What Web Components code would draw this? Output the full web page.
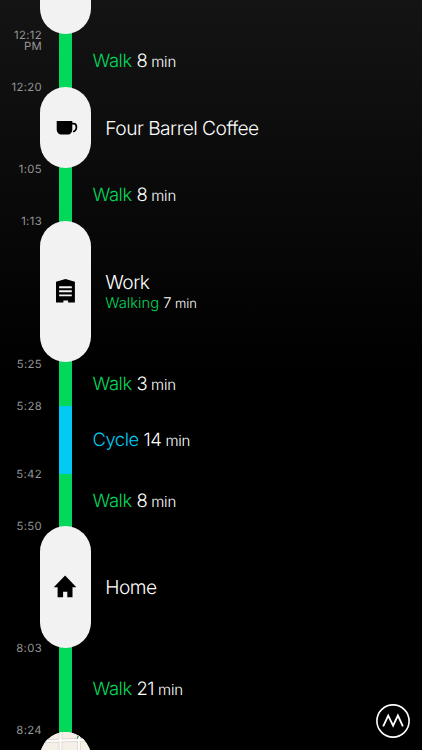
<!DOCTYPE html>
<html lang="en">
<head>
<meta charset="utf-8">
<title>Timeline</title>
<style>
html,body{margin:0;height:100%;background:#000;overflow:hidden}
</style>
</head>
<body>
<day-timeline>
  <place-visit style="--h:34.4px"></place-visit>
  <trip-leg time="12:12 PM" activity="Walk" amount="8" style="--h:52.4px;--label-shift:1.2px"></trip-leg>
  <place-visit time="12:20" icon="cup" style="--h:81.4px">Four Barrel Coffee</place-visit>
  <trip-leg time="1:05" activity="Walk" amount="8" style="--h:52.6px;--label-shift:1.2px"></trip-leg>
  <place-visit time="1:13" icon="office" activity="Walking" amount="7" style="--h:141.2px">Work</place-visit>
  <trip-leg time="5:25" activity="Walk" amount="3" style="--h:44.5px;--time-shift:1.2px;--label-shift:-1px"></trip-leg>
  <trip-leg time="5:28" activity="Cycle" amount="14" style="--h:67.5px;--leg:#02caf2;--time-shift:-.9px;--label-shift:-1px"></trip-leg>
  <trip-leg time="5:42" activity="Walk" amount="8" style="--h:52px;--label-shift:1.6px"></trip-leg>
  <place-visit time="5:50" icon="home" style="--h:122.2px">Home</place-visit>
  <trip-leg time="8:03" activity="Walk" amount="21" style="--h:83.8px;--time-shift:-.9px;--label-shift:-1.6px;--label-lift:1px"></trip-leg>
  <place-visit time="8:24" icon="map" style="--h:81px;--time-shift:-2.4px"></place-visit>
  <brand-badge slot="badge"></brand-badge>
</day-timeline>
<script>
const icons = {
  cup: '<svg width="51" height="40" viewBox="0 0 51 40"><path d="M16.7 14h15.6v8.2c0 3-1.8 5.4-4.8 5.4h-5.8c-3 0-5-2.4-5-5.4z"/><path d="M32 16.6h1.4c2.2 0 3 1.4 3 3.3 0 2.3-1 4-3.3 4.8" fill="none" stroke="#000" stroke-width="1.7"/></svg>',
  office: '<svg width="51" height="40" viewBox="0 0 51 40"><path d="M16 10.8 25.5 8l9.4 2.8v20.7h-6.8v-2h-4.7v2H16z"/><path d="M19.1 16.3h12.7M19.1 20.3h12.7M19.1 24.4h12.7" stroke="#f2f2f2" stroke-width="1.9"/></svg>',
  home: '<svg width="51" height="40" viewBox="0 0 51 40"><path d="m25.1 8.5 11 11.4v.4h-3.6v9.9h-5.2v-5.4h-4.2v5.4h-5.5v-9.9H14v-.4z"/></svg>',
  map: '<svg width="51" height="81" viewBox="0 0 51 81"><rect width="51" height="81" fill="#f5f0e7"/><path d="M0 9.2 51 7.5M20.5 0v81M38.8 0v81M0 30h51" fill="none" stroke="#d6d2ca" stroke-width="3.6"/><path d="M0 9.2 51 7.5M20.5 0v81M38.8 0v81M0 30h51" fill="none" stroke="#fff" stroke-width="2"/><path d="M38.6 3.3q-.8 1.8-1.4 3.2" fill="none" stroke="#21943d" stroke-width="1.1"/></svg>'
};

const rowStyles = `
  :host{display:grid;grid-template-columns:40px 51px 1fr;height:var(--h);position:relative}
  .time{margin:calc(-4.5px + var(--time-shift,0px)) -2px 0 0;padding-left:6px;text-align:right;
    font-size:11.3px;line-height:11.2px;letter-spacing:.35px;font-weight:400;color:#969696}
  .amount{font-weight:350;color:#fff}
  .activity{color:#04d85b}`;

class DayTimeline extends HTMLElement {
  constructor() {
    super();
    this.attachShadow({mode: 'open'}).innerHTML = `<style>
      :host{display:block;position:relative;width:422px;height:750px;overflow:hidden;
        background:linear-gradient(#141414 0,#0d0d0d 130px,#060606 260px,#000 375px);
        font-family:Inter,"Liberation Sans",sans-serif;font-weight:300;color:#fff;text-rendering:geometricPrecision}
      main{display:flex;flex-direction:column}
      aside{position:absolute;right:11px;bottom:11.5px}
    </style><main><slot></slot></main><aside><slot name="badge"></slot></aside>`;
  }
}

class TripLeg extends HTMLElement {
  connectedCallback() {
    this.attachShadow({mode: 'open'}).innerHTML = `<style>${rowStyles}
      .bar{width:12.4px;margin:0 0 0 19.3px;background:var(--leg,#04d85b)}
      .label{align-self:center;padding:calc(1.6px + var(--label-shift,0px)) 0 var(--label-lift,0px) 1.5px;font-size:18.4px;line-height:22px;letter-spacing:-.45px;white-space:nowrap}
      .activity{color:var(--leg,#04d85b)}
      .unit{font-size:15px;letter-spacing:-.2px}
    </style>
    <div class="time">${this.getAttribute('time')}</div>
    <div class="bar"></div>
    <div class="label"><span class="activity">${this.getAttribute('activity')}</span> <span class="amount">${this.getAttribute('amount')}</span><span class="unit"> min</span></div>`;
    const bar = this.shadowRoot.querySelector('.bar');
    if (this.previousElementSibling?.localName === 'place-visit') bar.style.marginTop = '-4px';
    if (this.nextElementSibling?.localName === 'place-visit') bar.style.marginBottom = '-4px';
  }
}

class PlaceVisit extends HTMLElement {
  connectedCallback() {
    const activity = this.getAttribute('activity');
    const icon = this.getAttribute('icon');
    this.attachShadow({mode: 'open'}).innerHTML = `<style>${rowStyles}
      :host{z-index:1}
      .pill{display:flex;align-items:center;justify-content:center;overflow:hidden;border-radius:25.5px;background:#f2f2f2}
      .pill.open{border-radius:0 0 25.5px 25.5px}
      svg{display:block;flex:none}
      .label{align-self:center;padding:1.6px 0 0 14.3px;font-size:19.2px;line-height:23px;letter-spacing:-.53px;white-space:nowrap}
      .detail{margin-top:-.6px;font-size:14.7px;line-height:18px;letter-spacing:.03px}
      .detail .activity{font-weight:350}
      .unit{font-size:13px;letter-spacing:-.1px}
    </style>
    <div class="time">${this.getAttribute('time') || ''}</div>
    <div class="pill${icon ? '' : ' open'}">${icons[icon] || ''}</div>
    <div class="label"><slot></slot>${activity ? `<div class="detail"><span class="activity">${activity}</span> <span class="amount">${this.getAttribute('amount')}</span><span class="unit"> min</span></div>` : ''}</div>`;
  }
}

class BrandBadge extends HTMLElement {
  constructor() {
    super();
    this.attachShadow({mode: 'open'}).innerHTML = `<style>:host,svg{display:block}</style>
    <svg width="36" height="36" viewBox="0 0 36 36" fill="none" stroke="#fff"><circle cx="18" cy="18" r="16.1" stroke-width="1.6"/><path d="m8.2 23.3 5-10.8 4.9 10.2 4.8-10.2 5 10.8" stroke-width="1.8"/></svg>`;
  }
}
customElements.define('day-timeline', DayTimeline);
customElements.define('trip-leg', TripLeg);
customElements.define('place-visit', PlaceVisit);
customElements.define('brand-badge', BrandBadge);
</script>
</body>
</html>
